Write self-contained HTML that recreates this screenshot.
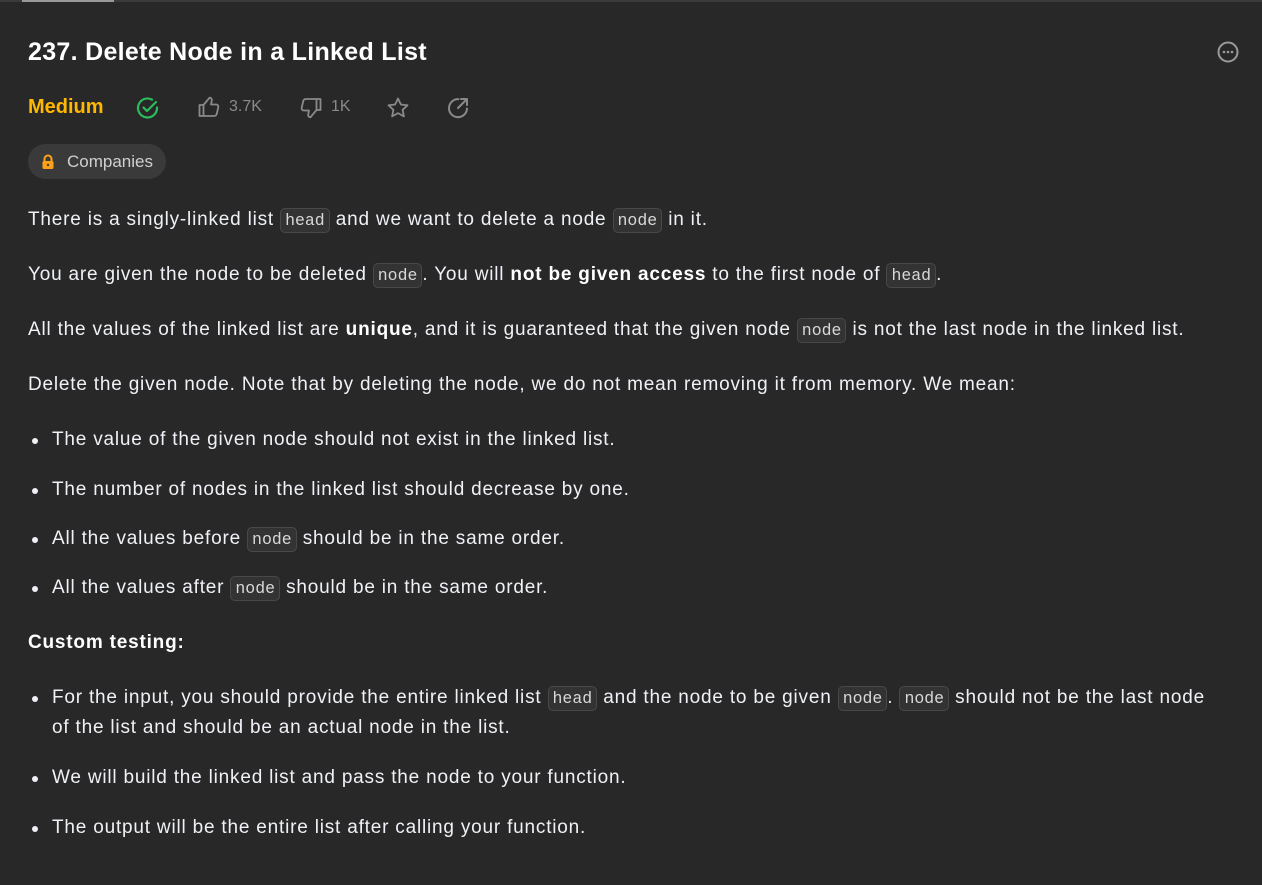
<!DOCTYPE html>
<html><head><meta charset="utf-8"><style>
html,body{margin:0;padding:0;width:1262px;height:885px;overflow:hidden;background:#282828;color:#eff1f6;font-family:"Liberation Sans",sans-serif;}
.top{position:absolute;left:0;top:0;width:1262px;height:2px;background:#3a3a3a}
.top i{position:absolute;left:22px;top:0;width:92px;height:2px;background:#9a9a9a}
h1{position:absolute;left:28px;top:38px;margin:0;font-size:25px;font-weight:bold;color:#fff;letter-spacing:0.3px}
.more{position:absolute;left:1217px;top:41px}
.a{position:absolute}
.med{position:absolute;left:28px;top:96px;color:#ffb800;font-weight:bold;font-size:20px}
.num{position:absolute;top:98px;font-size:16px;color:#8a8a8a}
.chip{position:absolute;left:28px;top:144px;width:138px;height:35px;border-radius:18px;background:#3a3a3a;display:flex;align-items:center;font-size:17px;color:#d0d0d0}
.t{position:absolute;left:28px;font-size:19px;white-space:nowrap;letter-spacing:0.8px}
code{font-family:"Liberation Mono",monospace;font-size:16.5px;background:#333;border:1px solid #484848;border-radius:5px;padding:2px 4px;color:#d8d8d8;letter-spacing:0}
.li{left:52px}
.dot{position:absolute;left:32px;width:6px;height:6px;border-radius:3px;background:#eff1f6}
b{color:#fff}
</style></head><body>
<div class="top"><i></i></div>
<h1>237. Delete Node in a Linked List</h1>
<svg class="more" width="22" height="22" viewBox="0 0 22 22"><circle cx="11" cy="11" r="9.5" fill="none" stroke="#9a9a9a" stroke-width="2"/><circle cx="7" cy="11" r="1.3" fill="#9a9a9a"/><circle cx="11" cy="11" r="1.3" fill="#9a9a9a"/><circle cx="15" cy="11" r="1.3" fill="#9a9a9a"/></svg>
<span class="med">Medium</span>
<svg class="a" style="left:136px;top:96px" width="24" height="24" viewBox="0 0 24 24"><path d="M21 11.5A9.5 9.5 0 1 1 16 3.6" fill="none" stroke="#2cbb5d" stroke-width="2.2" stroke-linecap="round"/><path d="M7.5 11.5l3.5 3.5 9-9" fill="none" stroke="#2cbb5d" stroke-width="2.2" stroke-linecap="round" stroke-linejoin="round"/></svg>
<svg class="a" style="left:198px;top:96px" width="22" height="22" viewBox="0 0 22 22"><path d="M1.5 9h4v11h-4zM5.5 20h10.5c1.5 0 2.5-1 2.8-2.3l1.5-6.5c.3-1.4-.7-2.7-2.1-2.7h-5.2l.8-4c.3-1.5-.7-2.8-2.2-2.8L5.5 9" fill="none" stroke="#8a8a8a" stroke-width="1.8" stroke-linejoin="round"/></svg>
<span class="num" style="left:229px">3.7K</span>
<svg class="a" style="left:300px;top:97px" width="22" height="22" viewBox="0 0 22 22"><g transform="rotate(180 11 11)"><path d="M1.5 9h4v11h-4zM5.5 20h10.5c1.5 0 2.5-1 2.8-2.3l1.5-6.5c.3-1.4-.7-2.7-2.1-2.7h-5.2l.8-4c.3-1.5-.7-2.8-2.2-2.8L5.5 9" fill="none" stroke="#8a8a8a" stroke-width="1.8" stroke-linejoin="round"/></g></svg>
<span class="num" style="left:331px">1K</span>
<svg class="a" style="left:386px;top:96px" width="24" height="24" viewBox="0 0 24 24"><path d="M12 2.5l2.9 6 6.6.8-4.9 4.5 1.3 6.6L12 17.1l-5.9 3.3 1.3-6.6-4.9-4.5 6.6-.8z" fill="none" stroke="#8a8a8a" stroke-width="1.8" stroke-linejoin="round"/></svg>
<svg class="a" style="left:446px;top:96px" width="24" height="24" viewBox="0 0 24 24"><path d="M21 12.5A9 9 0 1 1 12.5 3.2" fill="none" stroke="#8a8a8a" stroke-width="2" stroke-linecap="round"/><path d="M12 12l8.5-8.5M15 3h6v6" fill="none" stroke="#8a8a8a" stroke-width="2" stroke-linecap="round" stroke-linejoin="round"/></svg>
<div class="chip"><svg style="margin-left:13px" width="14" height="16" viewBox="0 0 14 16"><path d="M3.5 7V5a3.5 3.5 0 0 1 7 0v2" fill="none" stroke="#ffa116" stroke-width="2"/><rect x="1.5" y="7" width="11" height="8" rx="1.5" fill="#ffa116"/><circle cx="7" cy="11" r="1.2" fill="#3a3a3a"/></svg><span style="margin-left:12px">Companies</span></div>

<div class="t" style="top:209px">There is a singly-linked list <code>head</code> and we want to delete a node <code>node</code> in it.</div>
<div class="t" style="top:264px">You are given the node to be deleted <code>node</code>. You will <b>not be given access</b> to the first node of <code>head</code>.</div>
<div class="t" style="top:319px">All the values of the linked list are <b>unique</b>, and it is guaranteed that the given node <code>node</code> is not the last node in the linked list.</div>
<div class="t" style="top:374px">Delete the given node. Note that by deleting the node, we do not mean removing it from memory. We mean:</div>
<div class="dot" style="top:438px"></div><div class="t li" style="top:429px">The value of the given node should not exist in the linked list.</div>
<div class="dot" style="top:488px"></div><div class="t li" style="top:479px">The number of nodes in the linked list should decrease by one.</div>
<div class="dot" style="top:537px"></div><div class="t li" style="top:528px">All the values before <code>node</code> should be in the same order.</div>
<div class="dot" style="top:586px"></div><div class="t li" style="top:577px">All the values after <code>node</code> should be in the same order.</div>
<div class="t" style="top:632px"><b>Custom testing:</b></div>
<div class="dot" style="top:696px"></div><div class="t li" style="top:687px">For the input, you should provide the entire linked list <code>head</code> and the node to be given <code>node</code>. <code>node</code> should not be the last node</div>
<div class="t li" style="top:717px">of the list and should be an actual node in the list.</div>
<div class="dot" style="top:776px"></div><div class="t li" style="top:767px">We will build the linked list and pass the node to your function.</div>
<div class="dot" style="top:826px"></div><div class="t li" style="top:817px">The output will be the entire list after calling your function.</div>
</body></html>
